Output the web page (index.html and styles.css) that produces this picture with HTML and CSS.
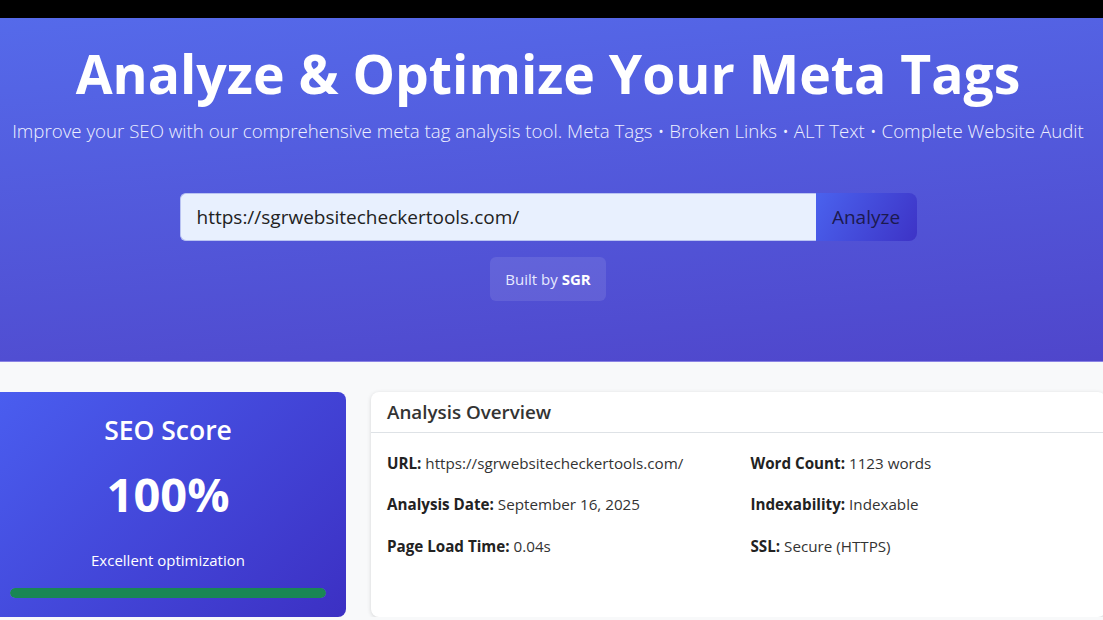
FILE: index.html
```html
<!DOCTYPE html>
<html lang="en">
<head>
  <meta charset="UTF-8" />
  <meta name="viewport" content="width=device-width, initial-scale=1.0"/>
  <title>Meta Tag Analyzer</title>
  <link rel="stylesheet" href="styles.css">
</head>
<body>

<div class="topbar"></div>

<div class="hero">
  <h1>Analyze &amp; Optimize Your Meta Tags</h1>
  <p class="lead">Improve your SEO with our comprehensive meta tag analysis tool. Meta Tags &bull; Broken Links &bull; ALT Text &bull; Complete Website Audit</p>

  <form class="search" onsubmit="return false;">
    <input type="text" value="https://sgrwebsitecheckertools.com/">
    <button type="submit">Analyze</button>
  </form>

  <div class="built">Built by <strong>SGR</strong></div>
</div>

<div class="results">
  <div class="score-card">
    <h2>SEO Score</h2>
    <div class="score">100%</div>
    <p>Excellent optimization</p>
    <div class="progress"><div class="progress-bar" style="width: 100%"></div></div>
  </div>

  <div class="card">
    <div class="card-header">Analysis Overview</div>
    <div class="card-body">
      <div class="col">
        <p><strong>URL:</strong> https://sgrwebsitecheckertools.com/</p>
        <p><strong>Analysis Date:</strong> September 16, 2025</p>
        <p><strong>Page Load Time:</strong> 0.04s</p>
      </div>
      <div class="col">
        <p><strong>Word Count:</strong> 1123 words</p>
        <p><strong>Indexability:</strong> Indexable</p>
        <p><strong>SSL:</strong> Secure (HTTPS)</p>
      </div>
    </div>
  </div>
</div>

</body>
</html>
```

FILE: styles.css
```css
* {
  box-sizing: border-box;
  margin: 0;
  padding: 0;
}
body {
  font-family: "Open Sans", "Noto Sans", sans-serif;
  background-color: #f8f9fa;
  color: #212529;
  overflow: hidden;
}
.topbar {
  height: 18px;
  background-color: #000;
}
.hero {
  background: linear-gradient(175deg, #556aea 0%, #4f46cb 100%);
  border-bottom: 1px solid #8a82e4;
  color: white;
  text-align: center;
  padding: 21px 7px 60px 0;
}
.hero h1 {
  font-size: 53.5px;
  font-weight: 700;
  line-height: 1.3;
}
.hero .lead {
  font-size: 18.7px;
  font-weight: 300;
  line-height: 1.5;
  color: #eef0ff;
  margin-top: 8px;
}
.search {
  display: flex;
  width: 737px;
  margin: 48px auto 0;
}
.search input {
  flex: 1;
  height: 48px;
  border: 1px solid #b9c3f2;
  border-right: none;
  border-radius: 6px 0 0 6px;
  background-color: #e8f0fe;
  padding: 0 16px;
  font-family: inherit;
  font-size: 19px;
  color: #222;
  outline: none;
}
.search button {
  width: 101px;
  height: 48px;
  border: none;
  border-radius: 0 8px 8px 0;
  background: linear-gradient(120deg, #4a62ee 0%, #3d33c6 100%);
  color: #1c1a4f;
  font-family: inherit;
  font-size: 19px;
  cursor: pointer;
}
.built {
  display: inline-block;
  margin-top: 16px;
  padding: 12px 15px;
  background-color: rgba(255, 255, 255, 0.1);
  border-radius: 6px;
  font-size: 15px;
  color: #e6e9ff;
}
.built strong {
  color: white;
}
.results {
  display: grid;
  grid-template-columns: 356px 1fr;
  gap: 25px;
  width: 1116px;
  margin: 30px 0 0 -10px;
}
.score-card {
  background: linear-gradient(135deg, #4a5ef0 0%, #3c30c3 100%);
  color: white;
  border-radius: 8px;
  padding: 21px 20px 20px;
  text-align: center;
  height: 225px;
}
.score-card h2 {
  font-size: 26.5px;
  font-weight: 600;
  line-height: 1.3;
}
.score {
  font-size: 47px;
  font-weight: 700;
  line-height: 1.2;
  margin-top: 19px;
}
.score-card p {
  font-size: 15px;
  line-height: 20px;
  margin-top: 28px;
}
.progress {
  height: 10px;
  margin-top: 18px;
  background-color: rgba(255, 255, 255, 0.2);
  border-radius: 5px;
  overflow: hidden;
}
.progress-bar {
  height: 100%;
  background-color: #198754;
  border-radius: 5px;
}
.card {
  background-color: white;
  border-radius: 8px;
  box-shadow: 0 1px 4px rgba(0, 0, 0, 0.15);
  height: 225px;
}
.card-header {
  padding: 8px 16px;
  border-bottom: 1px solid #dee2e6;
  font-size: 18.8px;
  font-weight: 600;
  color: #333;
  line-height: 24px;
}
.card-body {
  display: grid;
  grid-template-columns: 1fr 1fr;
  gap: 24px;
  padding: 19px 16px;
}
.card-body p {
  font-size: 15.2px;
  line-height: 22px;
  margin-bottom: 19.5px;
  color: #333;
}
.card-body strong {
  color: #222;
}
```
